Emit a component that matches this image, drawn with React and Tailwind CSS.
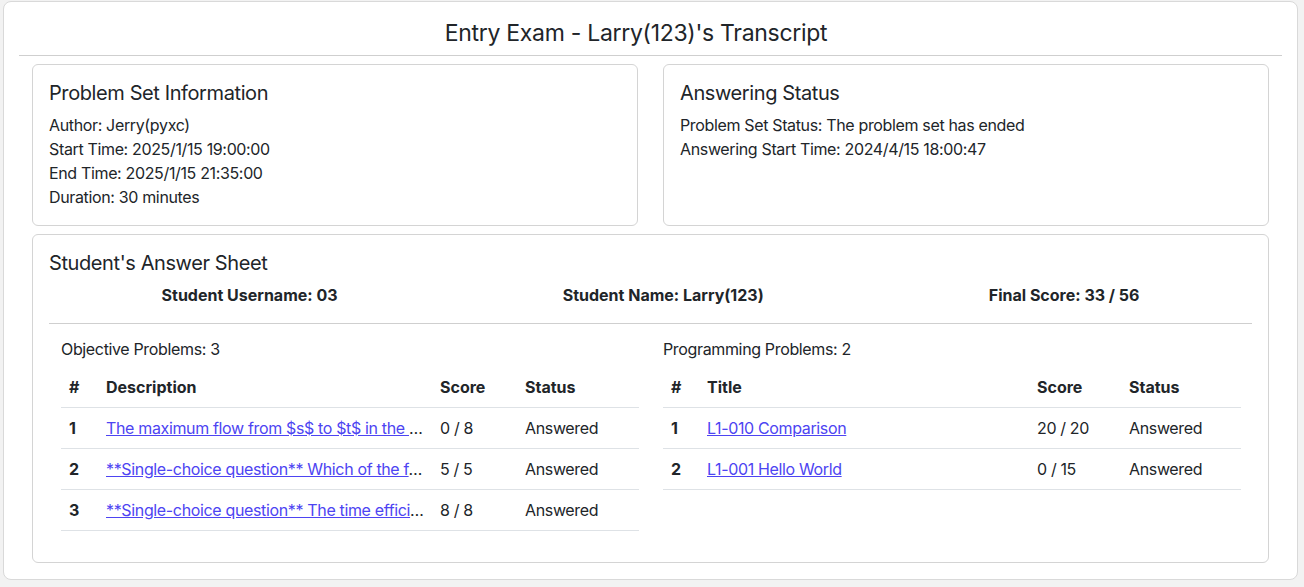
import React from 'react';

const objective = [
  { id: 1, text: 'The maximum flow from $s$ to $t$ in the network shown below is', score: '0 / 8' },
  { id: 2, text: '**Single-choice question** Which of the following statements is correct', score: '5 / 5' },
  { id: 3, text: '**Single-choice question** The time efficiency of the algorithm', score: '8 / 8' },
];

const programming = [
  { id: 1, text: 'L1-010 Comparison', score: '20 / 20' },
  { id: 2, text: 'L1-001 Hello World', score: '0 / 15' },
];

const InfoCard = ({ title, lines }) => (
  <div className="flex-1 rounded-md border border-[#d4d4d4] bg-white p-4">
    <h5 className="mb-2 text-[20px] leading-[24px] tracking-[-0.4px] text-[#212529]">{title}</h5>
    {lines.map((l) => (
      <div key={l} className="text-[16px] leading-[24px] tracking-[-0.35px] text-[#212529]">{l}</div>
    ))}
  </div>
);

const ProblemTable = ({ label, head, rows, widths }) => (
  <div className="flex-1 px-3">
    <div className="mt-[13px] mb-[6px] text-[16px] leading-[24px] tracking-[-0.35px] text-[#212529]">{label}</div>
    <table className="w-full table-fixed border-collapse text-[16px] leading-[24px] text-[#212529]">
      <colgroup>
        {widths.map((w, i) => (
          <col key={i} className={w} />
        ))}
      </colgroup>
      <thead>
        <tr className="border-b border-[#dee2e6]">
          <th className="p-2 text-left font-bold">#</th>
          <th className="p-2 text-left font-bold">{head}</th>
          <th className="p-2 text-left font-bold">Score</th>
          <th className="p-2 text-left font-bold">Status</th>
        </tr>
      </thead>
      <tbody>
        {rows.map((r) => (
          <tr key={r.id} className="border-b border-[#dee2e6]">
            <td className="p-2 font-bold">{r.id}</td>
            <td className="p-2 tracking-[-0.35px]">
              <div className="truncate">
                <a href="#" className="text-[#4d44f2] underline">{r.text}</a>
              </div>
            </td>
            <td className="p-2 tracking-[-0.35px]">{r.score}</td>
            <td className="p-2 tracking-[-0.35px]">Answered</td>
          </tr>
        ))}
      </tbody>
    </table>
  </div>
);

export default function App() {
  return (
    <div className="min-h-[587px] bg-[#f2f2f2] pl-[3px] pr-[6px] pt-[1px] pb-[6px] font-['Inter',sans-serif]">
      <div className="rounded-lg border border-[#d9d9d9] bg-white px-[15px] pb-4">
        {/* Page title */}
        <div className="border-b border-[#cfcfcf] pr-[29px] pt-[17px] pb-[8px] text-center text-[23px] leading-[28px] tracking-[-0.3px] text-[#212529]">
          Entry Exam - Larry(123)'s Transcript
        </div>

        <div className="px-[13px] pt-[8px]">
          <div className="flex gap-[25px]">
            <InfoCard
              title="Problem Set Information"
              lines={[
                'Author: Jerry(pyxc)',
                'Start Time: 2025/1/15 19:00:00',
                'End Time: 2025/1/15 21:35:00',
                'Duration: 30 minutes',
              ]}
            />
            <InfoCard
              title="Answering Status"
              lines={[
                'Problem Set Status: The problem set has ended',
                'Answering Start Time: 2024/4/15 18:00:47',
              ]}
            />
          </div>

          {/* Answer sheet */}
          <div className="mt-[8px] rounded-md border border-[#d4d4d4] bg-white px-4 pt-4 pb-[15px]">
            <h5 className="mb-2 text-[20px] leading-[24px] tracking-[-0.4px] text-[#212529]">Student's Answer Sheet</h5>
            <div className="flex justify-around border-b border-[#cfcfcf] pb-[16px] text-[16px] leading-[24px] font-bold text-[#212529]">
              <span>Student Username: 03</span>
              <span>Student Name: Larry(123)</span>
              <span>Final Score: 33 / 56</span>
            </div>
            <div className="flex pb-4">
              <ProblemTable
                label="Objective Problems: 3"
                head="Description"
                rows={objective}
                widths={['w-[37px]', 'w-[334px]', 'w-[85px]', 'w-[122px]']}
              />
              <ProblemTable
                label="Programming Problems: 2"
                head="Title"
                rows={programming}
                widths={['w-[36px]', 'w-[330px]', 'w-[92px]', 'w-[120px]']}
              />
            </div>
          </div>
        </div>
      </div>
    </div>
  );
}
